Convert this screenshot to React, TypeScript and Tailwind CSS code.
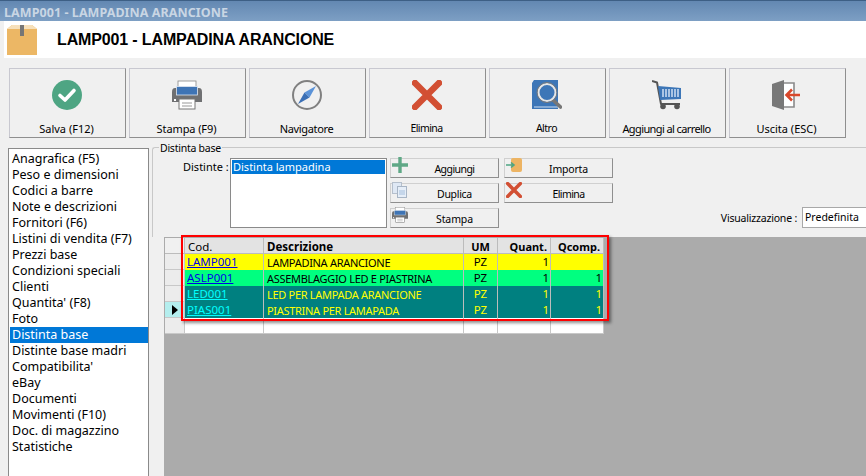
import React from "react";

const F = { fontFamily: '"Noto Sans", Tahoma, sans-serif' };

const Box = ({ s = 30 }: { s?: number }) => (
  <svg width={s} height={s} viewBox="0 0 30 30">
    <path d="M0 4 L5 0 H25 L30 4 V30 H0Z" fill="#ecb765" />
    <path d="M0 4 L5 0 H25 L30 4Z" fill="#f6e0bb" />
    <rect x="13" y="0" width="4" height="11" fill="#767676" />
  </svg>
);

const Check = () => (
  <svg width="30" height="30" viewBox="0 0 30 30">
    <circle cx="15" cy="15" r="15" fill="#4ea583" />
    <path d="M8 15.5 L13 20 L22 10.5" stroke="#fff" strokeWidth="3.6" fill="none" strokeLinecap="round" strokeLinejoin="round" />
  </svg>
);

const Printer = ({ s = 30 }: { s?: number }) => (
  <svg width={s} height={s} viewBox="0 0 30 30">
    <rect x="6" y="1" width="18" height="9" fill="#fff" stroke="#888" strokeWidth="0.8" />
    <path d="M0 12 Q0 8 3 8 H27 Q30 8 30 12 V22 H0Z" fill="#6f7072" />
    <rect x="4.500" y="6.500" width="21" height="8.500" fill="#3e74b5" stroke="#dfe7f0" strokeWidth="0.8" />
    <rect x="2" y="19" width="2" height="2" fill="#fff" />
    <rect x="7" y="19" width="16" height="10" fill="#fff" stroke="#777" strokeWidth="1" />
    <path d="M10 23 H20 M10 26 H20" stroke="#999" strokeWidth="1" />
  </svg>
);

const Compass = () => (
  <svg width="30" height="30" viewBox="0 0 30 30">
    <circle cx="15" cy="15" r="14" fill="none" stroke="#808080" strokeWidth="2" />
    <path d="M24 6 L17.5 17.5 L12.5 12.5Z" fill="#5b93d8" />
    <path d="M6 24 L12.5 12.5 L17.5 17.5Z" fill="#3a6fb5" />
  </svg>
);

const Cross = ({ s = 30 }: { s?: number }) => (
  <svg width={s} height={s} viewBox="0 0 30 30">
    <path d="M3 3 L27 27 M27 3 L3 27" stroke="#d24f33" strokeWidth="6.5" strokeLinecap="round" />
  </svg>
);

const Book = () => (
  <svg width="30" height="30" viewBox="0 0 30 30">
    <path d="M2 0 H26 V29 H0 V3Z" fill="#3d76b7" />
    <rect x="2" y="26.500" width="24" height="1" fill="#cfe0f3" />
    <path d="M21 20 L28.500 27" stroke="#777" strokeWidth="3.600" strokeLinecap="round" />
    <circle cx="15" cy="12.500" r="8.500" fill="#3d76b7" stroke="#e6e6e6" strokeWidth="2" />
    <circle cx="15" cy="12.500" r="10" fill="none" stroke="#7a7a7a" strokeWidth="1" />
  </svg>
);

const Cart = () => (
  <svg width="30" height="30" viewBox="0 0 30 30">
    <path d="M0 1 L5 2.500 L9 24 H28" stroke="#555" strokeWidth="2" fill="none" strokeLinejoin="round" />
    <path d="M6 6 L29 8 V19 L8 20Z" fill="#3d76b7" />
    <path d="M11 9 V17 M14 9 V17 M17 9 V17 M20 9 V17 M23 9 V17 M26 9 V17" stroke="#cfe0f3" strokeWidth="1.500" />
    <circle cx="11" cy="26.500" r="2.800" fill="#555" />
    <circle cx="25" cy="26.500" r="2.800" fill="#555" />
  </svg>
);

const Exit = () => (
  <svg width="30" height="30" viewBox="0 0 30 30">
    <path d="M12 3 H22 V27 H12" fill="#fff" stroke="#8a8a8a" strokeWidth="1.600" />
    <path d="M0 4 L12 0 V30 L0 26Z" fill="#787878" />
    <path d="M28 15 H15 M20 9.500 L14.500 15 L20 20.500" stroke="#d9482b" strokeWidth="2.600" fill="none" />
  </svg>
);

const Plus = () => (
  <svg width="16" height="16" viewBox="0 0 16 16">
    <path d="M8 0 V16 M0 8 H16" stroke="#5fa886" strokeWidth="3.400" />
  </svg>
);

const Copy = () => (
  <svg width="16" height="16" viewBox="0 0 16 16">
    <rect x="0.500" y="0.500" width="9" height="11" fill="#dfe8f4" stroke="#b5bfcc" />
    <rect x="5.500" y="4.500" width="9" height="11" fill="#e6eef8" stroke="#a8b5c5" />
    <rect x="7" y="8" width="6" height="5" fill="#c5d6ea" />
  </svg>
);

const ImportIcon = () => (
  <svg width="16" height="16" viewBox="0 0 16 16">
    <rect x="5" y="1" width="11" height="14" rx="2" fill="#edb463" />
    <path d="M0 8 H7 M5 5.500 L8 8 L5 10.500" stroke="#4ea583" strokeWidth="1.600" fill="none" />
  </svg>
);

const tools: [React.ReactNode, string, string][] = [
  [<Check />, "Salva (F12)", "text-[11px]"],
  [<Printer />, "Stampa (F9)", "text-[11px] tracking-[-0.1px]"],
  [<Compass />, "Navigatore", "text-[11px] tracking-[-0.35px]"],
  [<Cross />, "Elimina", "text-[10.5px] tracking-[-0.6px]"],
  [<Book />, "Altro", "text-[10.5px] tracking-[-0.5px]"],
  [<Cart />, "Aggiungi al carrello", "text-[11px] tracking-[-0.6px]"],
  [<Exit />, "Uscita (ESC)", "text-[11px]"],
];

const menu = [
  "Anagrafica (F5)", "Peso e dimensioni", "Codici a barre", "Note e descrizioni", "Fornitori (F6)",
  "Listini di vendita (F7)", "Prezzi base", "Condizioni speciali", "Clienti", "Quantita' (F8)", "Foto",
  "Distinta base", "Distinte base madri", "Compatibilita'", "eBay", "Documenti", "Movimenti (F10)",
  "Doc. di magazzino", "Statistiche",
];

const ActionBtn = ({ icon, label, t }: { icon: React.ReactNode; label: string; t: string }) => (
  <button className="relative flex h-[20px] w-[109px] items-center justify-center border border-t-[#d0d0d0] border-l-[#d0d0d0] border-r-[#8f8f8f] border-b-[#8f8f8f] bg-[#f0f0f0] pt-[3px] text-[10.5px] leading-none text-black">
    <span className="absolute left-[1px] top-[-2px]">{icon}</span>
    <span className={`pl-[20px] ${t}`}>{label}</span>
  </button>
);

const rows = [
  { cod: "LAMP001", des: "LAMPADINA ARANCIONE", q: "1", c: "", bg: "bg-[#ffff00]", fg: "text-black", link: "text-[#0000e6]" },
  { cod: "ASLP001", des: "ASSEMBLAGGIO LED E PIASTRINA", q: "1", c: "1", bg: "bg-[#00ff80]", fg: "text-black", link: "text-[#0000e6]" },
  { cod: "LED001", des: "LED PER LAMPADA ARANCIONE", q: "1", c: "1", bg: "bg-[#008080]", fg: "text-[#ffff00]", link: "text-[#00ffff]" },
  { cod: "PIAS001", des: "PIASTRINA PER LAMAPADA", q: "1", c: "1", bg: "bg-[#008080]", fg: "text-[#ffff00]", link: "text-[#00ffff]" },
];

const cell = "flex items-center overflow-hidden whitespace-nowrap border-r border-[#bcbcbc] px-[3px] leading-none";

export default function App() {
  return (
    <div style={F} className="flex h-[476px] w-[866px] flex-col overflow-hidden bg-[#f0f0f0] text-black">
      <div className="h-[21px] shrink-0 border-t border-[#3d5f85] bg-gradient-to-b from-[#6388b2] to-[#7d9fc4] pl-[4px] text-[12.5px] font-bold leading-[24px] tracking-[0.07px] text-[#c9d6e4]">
        LAMP001 - LAMPADINA ARANCIONE
      </div>
      <div className="ml-[4px] flex h-[37px] shrink-0 items-center bg-white pl-[3px]">
        <Box />
        <div className="ml-[20px] text-[16px] font-bold tracking-[-0.14px]" style={{ fontFamily: '"Liberation Sans", Arial, sans-serif' }}>LAMP001 - LAMPADINA ARANCIONE</div>
      </div>
      <div className="mt-[10px] flex shrink-0 gap-[3px] pl-[9px]">
        {tools.map(([icon, label, t]) => (
          <button key={label} className="flex h-[70px] w-[117px] flex-col items-center border border-t-[#c8c8d0] border-l-[#c8c8d0] border-r-[#8f8f8f] border-b-[#8f8f8f] bg-[#f0f0f0] pr-[2px] pt-[11px] leading-none">
            <span className="flex h-[30px] items-center">{icon}</span>
            <span className={`mt-[13px] whitespace-nowrap ${t}`}>{label}</span>
          </button>
        ))}
      </div>
      <div className="mt-[10px] flex min-h-0 flex-1 pl-[8px]">
        <div className="h-[330px] w-[141px] shrink-0 border border-[#8a8a8a] bg-white pl-[1px] pt-[2px]">
          {menu.map((m) => (
            <div key={m} className={`h-[16px] whitespace-nowrap pl-[2px] text-[12.5px] leading-[16px] ${m === "Distinta base" ? "bg-[#0078d7] text-white" : ""}`}>{m}</div>
          ))}
        </div>
        <div className="ml-[3px] mt-[-1px] flex min-w-0 flex-1 flex-col">
          <div className="relative h-[90px] shrink-0 rounded-tl-[3px] border-l border-t border-[#c8c8c8]">
            <span className="absolute left-[6px] top-[-7px] bg-[#f0f0f0] px-[1px] text-[10.5px] leading-[14px] tracking-[-0.25px]">Distinta base</span>
            <div className="flex pl-[30px] pt-[10px]">
              <div className="flex">
                <span className="w-[47px] whitespace-nowrap pt-[1px] text-[11px] leading-[16px]">Distinte :</span>
                <div className="h-[70px] w-[157px] border border-[#8a8a8a] bg-white p-[1px]">
                  <div className="h-[14px] whitespace-nowrap bg-[#0078d7] pl-[1px] text-[11px] leading-[14px] text-white">Distinta lampadina</div>
                </div>
              </div>
              <div className="ml-[3px] flex flex-col gap-[5px]">
                <ActionBtn icon={<Plus />} label="Aggiungi" t="tracking-[-0.55px]" />
                <ActionBtn icon={<Copy />} label="Duplica" t="tracking-[-0.3px]" />
                <ActionBtn icon={<Printer s={16} />} label="Stampa" t="tracking-[-0.1px]" />
              </div>
              <div className="ml-[5px] flex flex-col gap-[5px]">
                <ActionBtn icon={<ImportIcon />} label="Importa" t="tracking-[-0.2px]" />
                <ActionBtn icon={<Cross s={16} />} label="Elimina" t="tracking-[-0.6px]" />
              </div>
              <div className="ml-auto flex items-end">
                <span className="mr-[5px] whitespace-nowrap text-[10.5px] leading-[20px] tracking-[-0.2px]">Visualizzazione :</span>
                <div className="h-[21px] w-[64px] border border-r-0 border-[#a8a8a8] bg-white pl-[2px] text-[10.5px] leading-[19px]">Predefinita</div>
              </div>
            </div>
          </div>
          <div className="relative ml-[12px] flex-1 bg-[#ababab] pl-[1px] pt-[1px]">
            <div className="w-[439px] bg-white">
              <div className="flex h-[16px] border-b border-[#bcbcbc] bg-[#e3e3e3] font-bold">
                <div className="w-[20px] border-r border-[#bcbcbc] bg-[#f0f0f0]" />
                <div className={`${cell} w-[79px] pt-[2px] text-[11.5px] font-normal`}>Cod.</div>
                <div className={`${cell} w-[200px] pt-[2px] text-[11.5px]`}>Descrizione</div>
                <div className={`${cell} w-[34px] justify-center pt-[2px] text-[11px]`}>UM</div>
                <div className={`${cell} w-[53px] justify-end pt-[2px] text-[11px]`}>Quant.</div>
                <div className={`${cell} w-[53px] justify-end pt-[2px] text-[11px]`}>Qcomp.</div>
              </div>
              {rows.map((r, i) => (
                <div key={r.cod} className={`flex h-[16px] ${r.bg} ${r.fg}`}>
                  <div className={`flex w-[20px] items-center justify-center border-r border-b border-[#c8c8c8] text-black ${i === 3 ? "bg-[#b4eeee]" : "bg-[#ececec]"}`}>
                    {i === 3 && <svg width="6" height="10" viewBox="0 0 6 10"><path d="M0 0 L6 5 L0 10Z" fill="#000" /></svg>}
                  </div>
                  <div className={`${cell} w-[79px] !px-[2px] text-[11.5px] underline ${r.link}`}>{r.cod}</div>
                  <div className={`${cell} w-[200px] text-[11px] tracking-[-0.3px]`}>{r.des}</div>
                  <div className={`${cell} w-[34px] justify-center text-[11.5px]`}>PZ</div>
                  <div className={`${cell} w-[53px] justify-end !px-[1px] text-[11.5px]`}>{r.q}</div>
                  <div className={`${cell} w-[53px] justify-end !px-[1px] text-[11.5px]`}>{r.c}</div>
                </div>
              ))}
              <div className="flex h-[16px] border-b border-[#c8c8c8] bg-white">
                <div className="w-[20px] border-r border-[#c8c8c8] bg-[#ececec]" />
                <div className="w-[79px] border-r border-[#c8c8c8]" />
                <div className="w-[200px] border-r border-[#c8c8c8]" />
                <div className="w-[34px] border-r border-[#c8c8c8]" />
                <div className="w-[53px] border-r border-[#c8c8c8]" />
                <div className="w-[53px] border-r border-[#c8c8c8]" />
              </div>
            </div>
            <div className="absolute left-[17px] top-[-2px] h-[86px] w-[428px] border-2 border-[#ff0000] shadow-[2px_2px_3px_rgba(0,0,0,0.45)]" />
          </div>
        </div>
      </div>
    </div>
  );
}
